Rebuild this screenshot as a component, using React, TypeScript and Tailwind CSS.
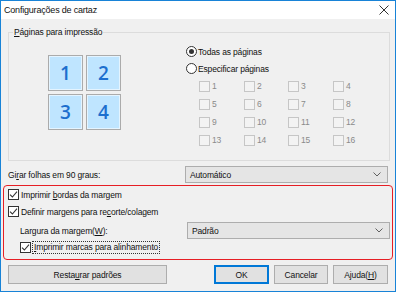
import React from "react";

const font = "font-['Liberation_Sans',Arial,sans-serif]";

function Check({ checked = false, disabled = false }: { checked?: boolean; disabled?: boolean }) {
  return (
    <span
      className={
        "flex w-[11px] h-[11px] shrink-0 items-center justify-center border " +
        (disabled ? "border-[#c6c6c6] bg-[#f3f3f3]" : "border-[#333] bg-white")
      }
    >
      {checked && (
        <svg width="9" height="9" viewBox="0 0 9 9">
          <path d="M1 4.6 L3.4 7 L8 1.6" fill="none" stroke="#333" strokeWidth="1.1" />
        </svg>
      )}
    </span>
  );
}

function Radio({ on = false }: { on?: boolean }) {
  return (
    <span className="flex w-[11px] h-[11px] shrink-0 items-center justify-center rounded-full border border-[#333] bg-white">
      {on && <span className="w-[5px] h-[5px] rounded-full bg-[#333]" />}
    </span>
  );
}

function Select({ value }: { value: string }) {
  return (
    <div className="ml-auto flex h-[17px] w-[203px] items-center justify-between border border-[#adadad] bg-[#e5e5e5] pl-[4px] pr-[6px]">
      <span>{value}</span>
      <svg width="8" height="5" viewBox="0 0 8 5">
        <path d="M0.5 0.5 L4 4 L7.5 0.5" fill="none" stroke="#606060" strokeWidth="1" />
      </svg>
    </div>
  );
}

const pages = Array.from({ length: 16 }, (_, i) => i + 1);

export default function App() {
  return (
    <div className={`${font} text-[8.5px] tracking-[-0.15px] leading-[12px] text-[#111] w-[396px] h-[292px] overflow-hidden border border-[#1883d7] bg-[#f0f0f0] flex flex-col`}>
      {/* title bar */}
      <div className="h-[18px] shrink-0 bg-white flex items-center justify-between pl-[3px] pr-[6px]">
        <span className="text-[9px] tracking-[-0.2px]">Configurações de cartaz</span>
        <svg width="10" height="10" viewBox="0 0 10 10">
          <path d="M0.5 0.5 L9.5 9.5 M9.5 0.5 L0.5 9.5" stroke="#333" strokeWidth="1" />
        </svg>
      </div>

      <div className="flex-1 flex flex-col px-[7px] pt-[7px]">
        <fieldset className="h-[135px] w-[382px] border border-[#dcdcdc]">
          <legend className="ml-[4px] px-[1px] leading-[12px]">
            <u>P</u>áginas para impressão
          </legend>
          <div className="flex items-start">
            <div className="ml-[39px] mt-[17px] grid grid-cols-2 gap-[3px]">
              {[1, 2, 3, 4].map((n) => (
                <div
                  key={n}
                  className="flex w-[35px] h-[36px] items-center justify-center border border-[#ababab] bg-[#bfe5ff] shadow-[inset_0_0_0_1px_#e4f4ff] font-['Open_Sans',sans-serif] text-[19px] font-semibold tracking-normal text-[#1d6fce]"
                >
                  {n}
                </div>
              ))}
            </div>
            <div className="ml-[65px] mt-[5px] flex flex-col">
              <div className="flex h-[17px] items-center gap-[1px]">
                <Radio on />
                <span>Todas as páginas</span>
              </div>
              <div className="flex h-[17px] items-center gap-[1px]">
                <Radio />
                <span>Especificar páginas</span>
              </div>
              <div className="grid grid-cols-[45px_44px_45px_45px] pl-[13px]">
                {pages.map((p) => (
                  <div key={p} className="flex h-[18px] items-center gap-[2px] text-[#8a8a8a]">
                    <Check disabled />
                    <span>{p}</span>
                  </div>
                ))}
              </div>
            </div>
          </div>
        </fieldset>

        <div className="mt-[5px] flex h-[17px] items-center">
          <span>
            Gi<u>r</u>ar folhas em 90 graus:
          </span>
          <Select value="Automático" />
        </div>

        {/* highlighted margin options */}
        <div className="-mx-[5px] mt-[2px] h-[75px] rounded-[4px] border-[1.5px] border-[#e61e25] pl-[4px] pr-[2px] flex flex-col">
          <div className="flex h-[17px] items-center gap-[2px]">
            <Check checked />
            <span>
              Imprimir <u>b</u>ordas da margem
            </span>
          </div>
          <div className="flex h-[17px] items-center gap-[2px]">
            <Check checked />
            <span>
              Definir margens para re<u>c</u>orte/colagem
            </span>
          </div>
          <div className="mt-[2px] flex h-[17px] items-center pl-[12px]">
            <span>
              Largura da margem(<u>W</u>):
            </span>
            <Select value="Padrão" />
          </div>
          <div className="flex h-[17px] items-center gap-[1px] pl-[12px]">
            <Check checked />
            <span className="border border-dotted border-[#333] px-[1px] leading-[11px]">
              <u>I</u>mprimir marcas para alinhamento
            </span>
          </div>
        </div>

        <div className="mt-[5px] flex h-[19px] items-stretch">
          <button className="w-[159px] border border-[#adadad] bg-[#e1e1e1]">
            Resta<u>u</u>rar padrões
          </button>
          <div className="ml-auto flex gap-[5px]">
            <button className="w-[55px] border border-[#0078d7] bg-[#e1e1e1] shadow-[inset_0_0_0_1px_#0078d7]">OK</button>
            <button className="w-[54px] border border-[#adadad] bg-[#e1e1e1]">Cancelar</button>
            <button className="w-[55px] border border-[#adadad] bg-[#e1e1e1]">
              Ajuda(<u>H</u>)
            </button>
          </div>
        </div>
      </div>
    </div>
  );
}
